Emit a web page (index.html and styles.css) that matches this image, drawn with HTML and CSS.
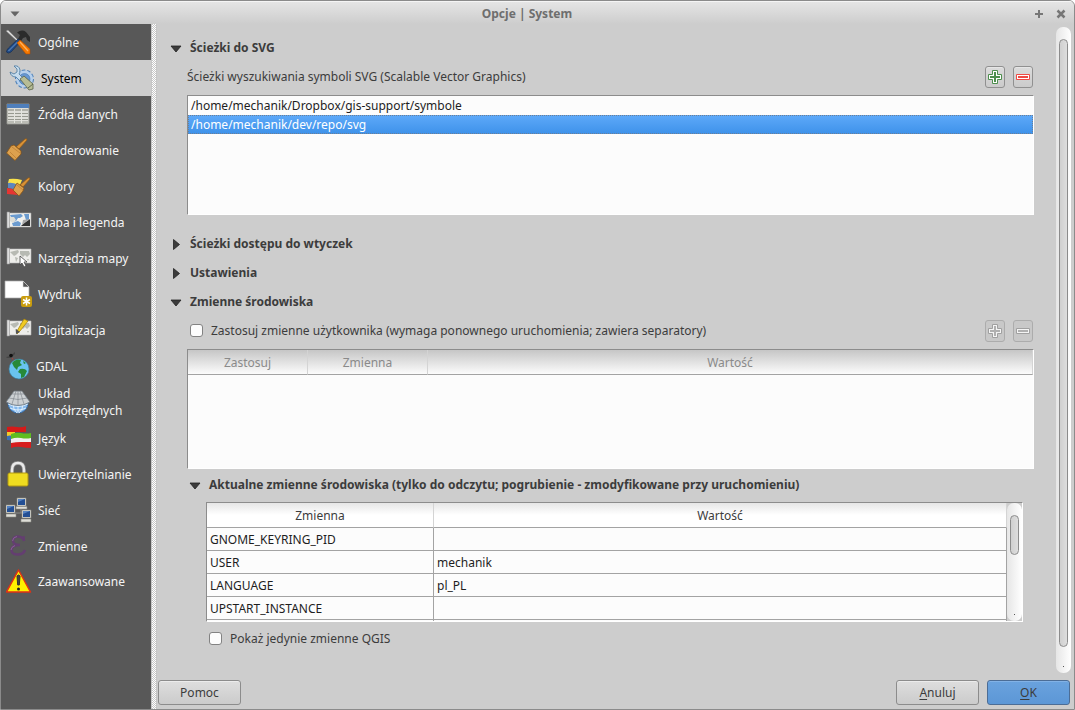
FILE: index.html
```html
<!DOCTYPE html>
<html lang="pl">
<head>
<meta charset="utf-8">
<title>Opcje | System</title>
<link rel="stylesheet" href="styles.css">
</head>
<body>
<div class="window">
  <header class="titlebar">
    <button class="title-button" aria-label="Menu okna"><svg width="10" height="6" viewBox="0 0 10 6"><path d="M.5.5h9L5 5.500z" fill="#666"/></svg></button>
    <h1 class="title">Opcje | System</h1>
    <div class="title-actions">
      <button class="title-button" aria-label="Maksymalizuj"><svg width="10" height="10" viewBox="0 0 10 10"><path d="M5 1v8M1 5h8" stroke="#777" stroke-width="2"/></svg></button>
      <button class="title-button" aria-label="Zamknij"><svg width="10" height="10" viewBox="0 0 10 10"><path d="M1.500 1.500l7 7M8.500 1.500l-7 7" stroke="#777" stroke-width="2.500"/></svg></button>
    </div>
  </header>

  <div class="body">
    <nav class="sidebar">
      <button class="item">
        <svg class="icon" viewBox="0 0 26 26"><path d="M0 2l2-1 11 11-1 1z" fill="#ddd" stroke="#777" stroke-width=".5"/><path d="M11 3.500Q16 0 20 3l4 5 0 5-3-2-1-3-3 1-2 3-3-2 2-4z" fill="#2b2b2b"/><path d="M12 10l3 2-10 11q-3 2-4.500 0 0-2 2-4z" fill="#234d87" stroke="#122d55" stroke-width=".7"/><path d="M11.500 13l-9 9" stroke="#6b95cb" stroke-width="1"/><path d="M11 14l3-3 10 9v5l-4 0z" fill="#f57900" stroke="#b34c00" stroke-width=".6"/><path d="M14 13l8 9" stroke="#ffb161" stroke-width="1.200"/></svg>
        <span>Ogólne</span>
      </button>
      <button class="item item-selected" aria-current="page">
        <svg class="icon" viewBox="0 0 26 26"><circle cx="15.500" cy="14" r="8.500" fill="#a7c5e8" stroke="#4d80b8" stroke-width="2" stroke-dasharray="3.500 1.800"/><circle cx="15.500" cy="14" r="8.500" fill="#b7d0ec"/><circle cx="15.500" cy="14" r="5.500" fill="#6898d1" stroke="#3f75b1" stroke-width=".6"/><path d="M5 1q5-1 6 4 0 3-1 4l4 4-3 3-4-4Q2 12 1 7l4 2 3-2V4z" fill="#c6dced" stroke="#47769d" stroke-width=".8"/><path d="M11 14l4-3 9 8v5l-4 1z" fill="#b7bd95" stroke="#5b6248" stroke-width=".8"/><path d="M19 23l5-4" stroke="#60674b"/></svg>
        <span>System</span>
      </button>
      <button class="item">
        <svg class="icon" viewBox="0 0 26 26"><path d="M1 3h22v20H1z" fill="#deded9" stroke="#8b8c86"/><path d="M1 3h22v4H1z" fill="#4f7fbc"/><path d="M2 8h20v2H2z" fill="#b0b1a9"/><path d="M2 12.500h20M2 15.500h20M2 18.500h20M2 21h20" stroke="#979990"/><path d="M8.500 8v14M15.500 8v14" stroke="#e4e5df"/></svg>
        <span>Źródła danych</span>
      </button>
      <button class="item">
        <svg class="icon" viewBox="0 0 26 26"><path d="M19 2q2-1 2 1L13 12l-3-2z" fill="#d89136" stroke="#8c5715" stroke-width=".7"/><path d="M5 9l3-1 7 6 0 3-6 6.500L.5 16z" fill="#dda14e" stroke="#8a5617" stroke-width=".8"/><path d="M6 10l8 6M4 15l6 6" stroke="#b87a30" stroke-width=".7"/></svg>
        <span>Renderowanie</span>
      </button>
      <button class="item">
        <svg class="icon" viewBox="0 0 26 26"><path d="M3 6q6-1 13 1l-2 5-12-2z" fill="#fae24b"/><path d="M2 10q6-1 11 3l-1 4-10-2z" fill="#5c86bf"/><path d="M1 15q5 0 9 3l2 4-11-1z" fill="#e63532"/><path d="M22 5q2-1 2 1l-7 8-3-2z" fill="#d89136" stroke="#8c5715" stroke-width=".7"/><path d="M11 10l7 5-1 3-4 5-6-6z" fill="#dda14e" stroke="#8a5617" stroke-width=".8"/><path d="M11 12l6 5" stroke="#b87a30" stroke-width=".7"/></svg>
        <span>Kolory</span>
      </button>
      <button class="item">
        <svg class="icon" viewBox="0 0 26 26"><path d="M3 4h22v14H3z" fill="#f1f1ee" stroke="#aaa" stroke-width=".6"/><path d="M1 3h2.500v16H1z" fill="#ddd" stroke="#999" stroke-width=".6"/><path d="M4 6l11-1 2 2-3 2-2 0-2 3-3 1zM18 5h5v6l-3 0-1-3zM6 14l6-2 3 2-1 3H7z" fill="#6b9bcf"/><path d="M4 8l4 0 2 3-3 3-3-2z" fill="#ddded8"/><path d="M15 17l3-3 6-4v7z" fill="#333"/><path d="M24 10l-8 6 1-5z" fill="#aaa"/></svg>
        <span>Mapa i legenda</span>
      </button>
      <button class="item">
        <svg class="icon" viewBox="0 0 26 26"><path d="M3 4h22v14H3z" fill="#eeeeeb" stroke="#bbb" stroke-width=".6"/><path d="M1 3h2.500v16H1z" fill="#ddd" stroke="#999" stroke-width=".6"/><path d="M4 7l8-2 1 2-3 3-2 1-2-2zM14 6l9 0 1 3-3 3-2-2-2 2-3-3zM9 12l3 1-2 4zM21 14l2 0-1 2z" fill="#b7bab3"/><path d="M14 11v9l2-2 2 4 2-1-2-4 3 0z" fill="#fff" stroke="#444" stroke-width=".8"/></svg>
        <span>Narzędzia mapy</span>
      </button>
      <button class="item">
        <svg class="icon icon-page" viewBox="0 0 28 28"><path d="M1 1h18l6 6v11H1z" fill="#fff" stroke="#aaa" stroke-width=".7"/><path d="M19 1v6h6z" fill="#555" stroke="#ddd" stroke-width=".6"/><rect x="17" y="16" width="11" height="11" rx="2" fill="#c99c0d"/><path d="M22.500 17.500v8M19 19.500l7 4M26 19.500l-7 4" stroke="#fff" stroke-width="1.500"/></svg>
        <span>Wydruk</span>
      </button>
      <button class="item">
        <svg class="icon" viewBox="0 0 26 26"><path d="M3 4h22v14H3z" fill="#eeeeeb" stroke="#bbb" stroke-width=".6"/><path d="M1 3h2.500v16H1z" fill="#ddd" stroke="#999" stroke-width=".6"/><path d="M4 7l8-2 1 2-3 3-2 1-2-2zM14 6l9 0 1 3-3 3-2-2-2 2-3-3zM9 12l3 1-2 4zM21 14l2 0-1 2z" fill="#b7bab3"/><path d="M11 14l7-12 4 2-8 10-3 3z" fill="#f0cb22" stroke="#a07b08" stroke-width=".7"/><path d="M10 12l4 3-4 2z" fill="#555"/></svg>
        <span>Digitalizacja</span>
      </button>
      <button class="item">
        <svg class="icon icon-globe" viewBox="0 0 24 28"><path d="M0 5l4-1 5-4 0 2-4 4-4 0z" fill="#444"/><circle cx="5" cy="3.500" r="1.800" fill="#111"/><path d="M6 6l5 7" stroke="#c33" stroke-dasharray="1 1"/><circle cx="13" cy="17" r="10" fill="#69c3ef" stroke="#397fa4" stroke-width=".6"/><path d="M6 11q4-5 9-3l-1 3 2 2-4 2-1 3-3-3zM17 9l3 2-2 1zM14 17q5-1 7 2l-3 6-3 1 0-4-3-2z" fill="#278939"/></svg>
        <span>GDAL</span>
      </button>
      <button class="item">
        <svg class="icon" viewBox="0 0 26 26"><circle cx="12" cy="14" r="10" fill="#85b9ec" stroke="#3c75b4"/><path d="M2 15q10 5 20 0M4 19q8 4 16 0M12 14v10M7 14q0 7 4 10M17 14q0 7-4 10" fill="none" stroke="#e5f3ff" stroke-width=".9"/><path d="M8 2h8l8 11q-12 7-24 0z" fill="#cdd1d4" stroke="#6b7278" stroke-width=".8"/><path d="M6 5h12M3 9q9 3 18 0M10 2l-4 13M14 2l4 13M12 2v14" fill="none" stroke="#788086" stroke-width=".6"/></svg>
        <span>Układ współrzędnych</span>
      </button>
      <button class="item">
        <svg class="icon" viewBox="0 0 26 26"><path d="M1 2q5-1 10 0t9-1v6H1z" fill="#d51a19"/><path d="M1 7h8v5q-5-1-8 0z" fill="#f3c927"/><path d="M1 11q3-1 6 0v5q-3-1-6-1z" fill="#3a70b6"/><path d="M5 9q5-2 10-1t10 0v6q-5 0-10 0t-10 1z" fill="#5ebd20"/><path d="M5 14q5-2 10-1t10 0v5q-5 0-10 0t-10 1z" fill="#efefef"/><path d="M5 18q5-1 10-1t10 0v6q-5 0-10-1t-10 1z" fill="#d71d1d"/></svg>
        <span>Język</span>
      </button>
      <button class="item">
        <svg class="icon" viewBox="0 0 26 26"><path d="M6 14V9q0-7 6-7t6 7v5" fill="none" stroke="#888" stroke-width="4"/><path d="M6 14V9q0-7 6-7t6 7v5" fill="none" stroke="#e9e9e9" stroke-width="2.500"/><rect x="2" y="12" width="20" height="13" rx="1.500" fill="#efdc20" stroke="#b09711"/></svg>
        <span>Uwierzytelnianie</span>
      </button>
      <button class="item">
        <svg class="icon" viewBox="0 0 26 26"><path d="M8 16h9M15 10v6" stroke="#888"/><g stroke="#8c8c84" stroke-width=".6"><path d="M11 1h9v8h-9zM0 8h9v8H0zM16 13h9v8h-9z" fill="#ddddd6"/><path d="M10 9.500h11v2.500H10zM0 17h10v3H0zM15 22h10v3H15z" fill="#deded8"/></g><path d="M12 2h7v6h-7zM1 9h7v6H1zM17 14h7v6h-7z" fill="#234f94"/><path d="M12 5l7-3h-7zM1 12l7-3H1zM17 17l7-3h-7z" fill="#5583c2"/></svg>
        <span>Sieć</span>
      </button>
      <button class="item">
        <svg class="icon" viewBox="0 0 26 26"><path d="M18 8C17 2 7 2 7 7.500 7 11 10 12 14 12 8 12 5.500 14 5.500 17 5.500 23 17 23 19 17" fill="none" stroke="#643e71" stroke-width="2.600"/><path d="M18 3v5" stroke="#643e71" stroke-width="1.600"/><path d="M6.500 8Q7 4 11 3.500M5 17q0-3 4-4.500" fill="none" stroke="#a078ac" stroke-width=".6"/></svg>
        <span>Zmienne</span>
      </button>
      <button class="item item-last">
        <svg class="icon" viewBox="0 0 26 26"><path d="M12.500 2L24.500 24H.500z" fill="#fff200" stroke="#e03115" stroke-width="1.500" stroke-linejoin="round"/><path d="M11 8q1.500-2 3 0l-.7 9h-1.600z" fill="#444" stroke="#333"/><circle cx="12.500" cy="21" r="1.500" fill="#222"/></svg>
        <span>Zaawansowane</span>
      </button>
    </nav>

    <div class="splitter"></div>

    <main class="main">
      <div class="scroll-area">
        <div class="content">
          <section class="group">
            <h2 class="heading"><button class="toggle" aria-expanded="true"><svg class="arrow" viewBox="0 0 12 14"><path d="M1 6h10l-5 6z" fill="#3c3c3c" stroke="#222" stroke-width=".8"/></svg>Ścieżki do SVG</button></h2>
            <div class="group-body">
              <div class="row">
                <span>Ścieżki wyszukiwania symboli SVG (Scalable Vector Graphics)</span>
                <span class="tools">
                  <button class="tool" aria-label="Dodaj ścieżkę"><svg width="14" height="14" viewBox="0 0 14 14"><path d="M4.500.5h5v4h4v5h-4v4h-5v-4h-4v-5h4z" fill="#fff" stroke="#4d8f4d"/><path d="M7 2v10M2 7h10" stroke="#4d8f4d" stroke-width="2"/></svg></button>
                  <button class="tool" aria-label="Usuń ścieżkę"><svg width="14" height="14" viewBox="0 0 14 14"><path d="M.5 4.500h13v5H.5z" fill="#fff" stroke="#ef4a45"/><path d="M2 7h10" stroke="#ef4a45" stroke-width="2"/></svg></button>
                </span>
              </div>
              <ul class="frame path-list" role="listbox" aria-label="Ścieżki wyszukiwania symboli SVG">
                <li class="path" role="option" aria-selected="false">/home/mechanik/Dropbox/gis-support/symbole</li>
                <li class="path path-selected" role="option" aria-selected="true">/home/mechanik/dev/repo/svg</li>
              </ul>
            </div>
          </section>

          <section class="group group-spaced">
            <h2 class="heading"><button class="toggle" aria-expanded="false"><svg class="arrow" viewBox="0 0 12 14"><path d="M3.500 3.500v10l6-5z" fill="#3c3c3c" stroke="#222" stroke-width=".8"/></svg>Ścieżki dostępu do wtyczek</button></h2>
          </section>
          <section class="group">
            <h2 class="heading"><button class="toggle" aria-expanded="false"><svg class="arrow" viewBox="0 0 12 14"><path d="M3.500 3.500v10l6-5z" fill="#3c3c3c" stroke="#222" stroke-width=".8"/></svg>Ustawienia</button></h2>
          </section>
          <section class="group">
            <h2 class="heading"><button class="toggle" aria-expanded="true"><svg class="arrow" viewBox="0 0 12 14"><path d="M1 6h10l-5 6z" fill="#3c3c3c" stroke="#222" stroke-width=".8"/></svg>Zmienne środowiska</button></h2>
            <div class="group-body">
              <div class="row">
                <label class="check"><input type="checkbox" class="box">Zastosuj zmienne użytkownika (wymaga ponownego uruchomienia; zawiera separatory)</label>
                <span class="tools">
                  <button class="tool" disabled aria-label="Dodaj zmienną"><svg width="14" height="14" viewBox="0 0 14 14"><path d="M4.500.5h5v4h4v5h-4v4h-5v-4h-4v-5h4z" fill="#f4f4f4" stroke="#a0a0a0"/><path d="M7 2v10M2 7h10" stroke="#b0b0b0" stroke-width="2"/></svg></button>
                  <button class="tool" disabled aria-label="Usuń zmienną"><svg width="14" height="14" viewBox="0 0 14 14"><path d="M.5 4.500h13v5H.5z" fill="#f4f4f4" stroke="#a0a0a0"/><path d="M2 7h10" stroke="#b0b0b0" stroke-width="2"/></svg></button>
                </span>
              </div>
              <div class="frame">
                <table class="table table-disabled">
                  <colgroup><col class="col-apply"><col class="col-name"><col></colgroup>
                  <thead><tr><th>Zastosuj</th><th>Zmienna</th><th>Wartość</th></tr></thead>
                </table>
              </div>

              <section class="subgroup">
                <h3 class="heading"><button class="toggle" aria-expanded="true"><svg class="arrow" viewBox="0 0 12 14"><path d="M1 6h10l-5 6z" fill="#3c3c3c" stroke="#222" stroke-width=".8"/></svg>Aktualne zmienne środowiska (tylko do odczytu; pogrubienie - zmodyfikowane przy uruchomieniu)</button></h3>
                <div class="subgroup-body">
                  <div class="frame frame-scroll">
                    <div class="table-view">
                      <table class="table table-values">
                        <colgroup><col class="col-variable"><col></colgroup>
                        <thead><tr><th>Zmienna</th><th>Wartość</th></tr></thead>
                        <tbody>
                          <tr><td>GNOME_KEYRING_PID</td><td></td></tr>
                          <tr><td>USER</td><td>mechanik</td></tr>
                          <tr><td>LANGUAGE</td><td>pl_PL</td></tr>
                          <tr><td>UPSTART_INSTANCE</td><td></td></tr>
                          <tr><td></td><td></td></tr>
                        </tbody>
                      </table>
                    </div>
                    <div class="track"><div class="thumb thumb-short"></div><div class="dot"></div></div>
                  </div>
                  <label class="check check-only"><input type="checkbox" class="box">Pokaż jedynie zmienne QGIS</label>
                </div>
              </section>
            </div>
          </section>
        </div>
        <div class="track track-main"><div class="thumb"></div><div class="dot"></div></div>
      </div>

      <footer class="footer">
        <button class="push">Pomoc</button>
        <span class="push-group">
          <button class="push"><span class="key">A</span>nuluj</button>
          <button class="push push-default"><span class="key">O</span>K</button>
        </span>
      </footer>
    </main>
  </div>
</div>
</body>
</html>
```
FILE: styles.css
```css
* { box-sizing: border-box; }
body { margin: 0; background: #fff; color: #3c3c3c; font: 12px/17px "Noto Sans", "Open Sans", sans-serif; }
button { font: inherit; color: inherit; padding: 0; border: 0; background: none; }
h1, h2, h3, ul { margin: 0; padding: 0; font-size: inherit; }
svg { display: block; flex: none; }

.window { min-height: 100vh; display: flex; flex-direction: column; border: 1px solid #8b8b8b; border-radius: 6px 6px 0 0; background: #cdcdcd; overflow: hidden; }
.titlebar { height: 23px; display: flex; align-items: center; padding: 2px 8px 0 9px; background: linear-gradient(#e6e6e6, #cdcdcd); box-shadow: inset 0 1px #f5f5f5; }
.title { flex: 1; text-align: center; color: #6e6e6e; font-weight: bold; }
.title-button { width: 10px; display: grid; place-items: center; }
.title-actions { display: flex; gap: 12px; }

.body { flex: 1; display: flex; }
.sidebar { width: 150px; flex: none; background: #585858; color: #f4f4f4; }
.item { width: 100%; height: 36px; display: flex; align-items: center; gap: 6px; padding-left: 5px; text-align: left; }
.item-selected { background: #cdcdcd; color: #000; padding-left: 8px; }
.item-last { height: 34px; }
.icon { width: 26px; height: 26px; }
.icon-page { width: 28px; height: 28px; margin-left: -2px; }
.icon-globe { width: 24px; height: 28px; }
.splitter { width: 6px; flex: none; border: solid #c6c6c6; border-width: 0 1px; background: conic-gradient(#fff 25%, #c8c8c8 0 50%, #fff 0 75%, #c8c8c8 0) 0 0 / 2px 2px; }

.main { flex: 1; min-width: 0; display: flex; flex-direction: column; }
.scroll-area { flex: 1; display: flex; gap: 22px; padding: 3px 3px 0 13px; }
.content { flex: 1; min-width: 0; padding-top: 10px; display: flex; flex-direction: column; gap: 9px; }
.group-spaced { margin-top: 9px; }
.heading { height: 20px; }
.toggle { height: 20px; display: flex; align-items: center; gap: 8px; font-weight: bold; }
.arrow { width: 12px; height: 14px; }
.group-body { padding: 9px 0 0 17px; }
.row { height: 22px; display: flex; justify-content: space-between; margin-bottom: 7px; line-height: 21px; }
.tools { display: flex; gap: 8px; padding-right: 1px; }
.tool { width: 20px; height: 22px; display: grid; place-items: center; border: 1px solid #909090; border-radius: 3px; background: linear-gradient(#dcdcdc, #cbcbcb); box-shadow: inset 0 1px #e6e6e6; }
.tool:disabled { border-color: #acacac; background: #c8c8c8; box-shadow: none; }

.frame { height: 120px; border: 1px solid #8c8c8c; border-right-color: #fff; border-bottom-color: #fff; background: #fcfcfc; overflow: hidden; }
.path-list { list-style: none; color: #1e1e1e; }
.path { height: 19px; line-height: 19px; padding-left: 3px; }
.path-selected { color: #fff; background: linear-gradient(#5ea9f9, #3e92ea); outline: 1px dotted #6d7f95; outline-offset: -1px; }

.check { display: flex; align-items: center; align-self: flex-start; gap: 8px; padding-left: 3px; }
.check-only { height: 20px; margin-top: 6px; }
.box { appearance: none; width: 13px; height: 13px; margin: 0; border: 1px solid #828282; border-radius: 3px; background: #fcfcfc; }

.table { width: 100%; table-layout: fixed; border-collapse: separate; border-spacing: 0; }
.table th { height: 25px; padding: 0; font-weight: normal; border-right: 1px solid #d4d4d4; border-bottom: 1px solid #a3a3a3; background: linear-gradient(#e6e6e6, #fff 50%); }
.table td { height: 23px; padding: 0 3px; color: #1e1e1e; border-right: 1px solid #a3a3a3; border-bottom: 1px solid #a3a3a3; }
.table-disabled { color: #8a8a8a; }
.table-disabled th { background: linear-gradient(#c6c6c6, #fcfcfc); }
.col-apply, .col-name { width: 120px; }
.col-variable { width: 227px; }

.subgroup { padding: 5px 11px 0 2px; }
.subgroup-body { padding: 8px 0 0 17px; }
.frame-scroll { display: flex; background: #cdcdcd; }
.table-view { flex: 1; min-width: 0; height: 118px; overflow: hidden; background: #fcfcfc; }

.track { width: 15px; flex: none; display: flex; flex-direction: column; align-items: center; padding: 12px 0 6px; border-radius: 7px; background: linear-gradient(90deg, #e6e6e6, #fff); }
.track-main { margin-bottom: 1px; }
.thumb { width: 9px; flex: 1; border: 1px solid #8c8c8c; border-radius: 5px; background: linear-gradient(90deg, #d0d0d0, #dedede); }
.thumb-short { flex: none; height: 40px; margin-bottom: auto; }
.dot { width: 1px; height: 1px; background: #555; }
.track-main .thumb { margin-bottom: 19px; }

.footer { display: flex; justify-content: space-between; padding: 6px 4px 4px 1px; }
.push-group { display: flex; gap: 8px; }
.push { width: 83px; height: 25px; border: 1px solid #8c8c8c; border-radius: 3px; background: linear-gradient(#dedede, #cbcbcb); box-shadow: inset 0 1px #ececec; }
.push-default { border-color: #4c6d96; background: linear-gradient(#6aa2de, #5c97d6); box-shadow: inset 0 1px #82b2e6; }
.key { text-decoration: underline; text-underline-offset: 2px; }
```
